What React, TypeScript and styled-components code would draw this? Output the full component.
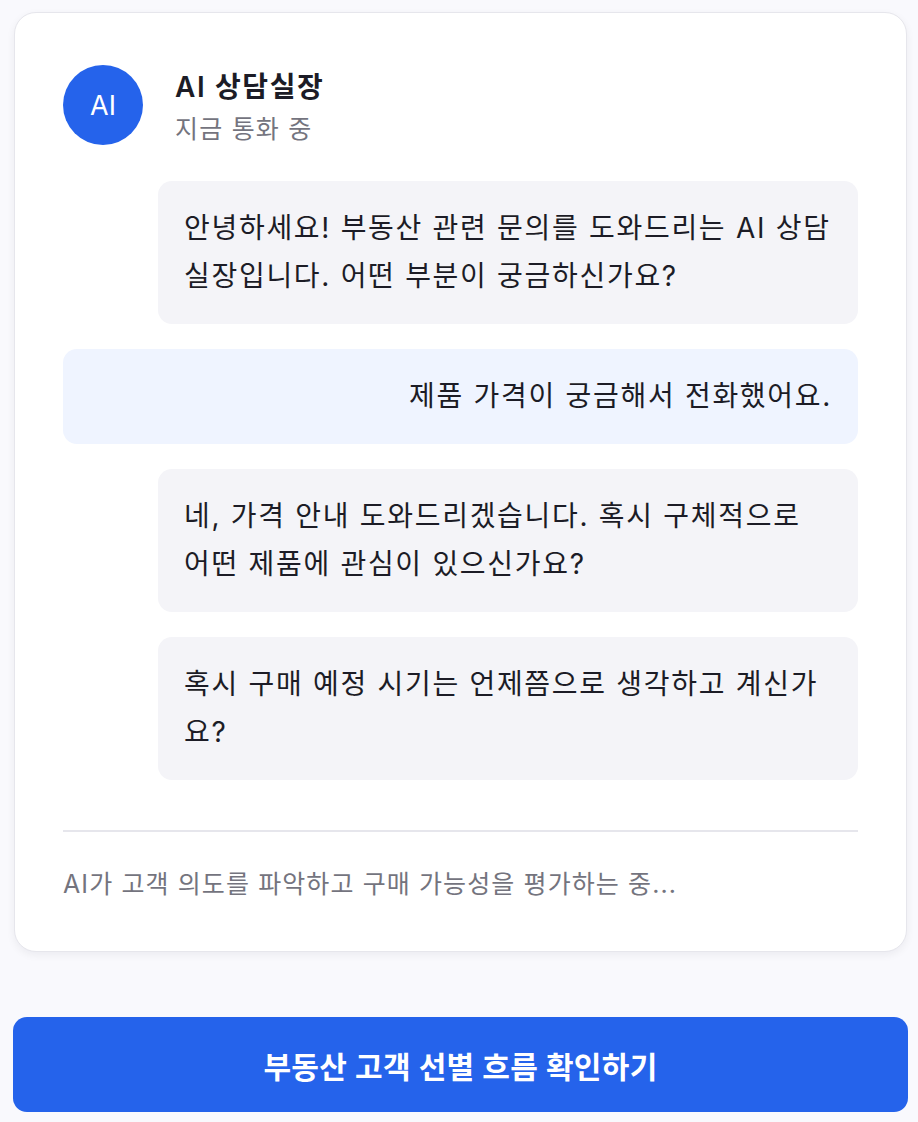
import styled, { createGlobalStyle } from "styled-components";

const GlobalStyle = createGlobalStyle`
  html, body {
    margin: 0;
    padding: 0;
    background: #f9f9fd;
  }
  body {
    font-family: "Inter", "Noto Sans CJK KR", sans-serif;
    color: #1c1c26;
  }
`;

const Page = styled.div`
  padding: 12px 10px 10px 13px;
  display: flex;
  flex-direction: column;
  gap: 65px;
`;

const Card = styled.section`
  margin-left: 1px;
  margin-right: 1px;
  background: #ffffff;
  border: 1px solid #e6e6ec;
  border-radius: 22px;
  box-shadow: 0 3px 8px rgba(20, 20, 40, 0.06);
  padding: 52px 48px 51px 48px;
`;

const Header = styled.header`
  display: flex;
  align-items: center;
  gap: 32px;
  margin-bottom: 36px;
`;

const Avatar = styled.div`
  width: 80px;
  height: 80px;
  border-radius: 50%;
  background: #2563eb;
  color: #ffffff;
  display: flex;
  align-items: center;
  justify-content: center;
  font-size: 27px;
  font-weight: 400;
`;

const Who = styled.div`
  display: flex;
  flex-direction: column;
  gap: 4px;
`;

const Name = styled.div`
  font-size: 28px;
  font-weight: 600;
  letter-spacing: 1.6px;
  color: #1c1c26;
`;

const Status = styled.div`
  font-size: 25px;
  letter-spacing: 1.2px;
  color: #74747e;
`;

const Messages = styled.div`
  display: flex;
  flex-direction: column;
  gap: 25px;
`;

const Bubble = styled.div<{ $mine?: boolean }>`
  align-self: ${(p) => (p.$mine ? "stretch" : "flex-end")};
  width: ${(p) => (p.$mine ? "auto" : "700px")};
  box-sizing: border-box;
  background: ${(p) => (p.$mine ? "#eff4ff" : "#f4f4f8")};
  border-radius: 14px;
  padding: 23px 26px 24px 26px;
  font-size: 28px;
  line-height: 48px;
  letter-spacing: 1.7px;
  text-align: ${(p) => (p.$mine ? "right" : "left")};
  color: #1c1c26;
`;

const Divider = styled.hr`
  border: none;
  border-top: 2px solid #e6e6ec;
  margin: 50px 0 0 0;
`;

const Thinking = styled.p`
  margin: 32px 0 0 0;
  font-size: 25px;
  letter-spacing: 1.1px;
  color: #74747e;
`;

const Action = styled.button`
  height: 95px;
  border: none;
  border-radius: 14px;
  background: #2563eb;
  color: #ffffff;
  font-family: "Inter", "Noto Sans CJK KR", sans-serif;
  font-size: 30px;
  font-weight: 600;
  letter-spacing: 0.3px;
  cursor: pointer;
`;

const chat = [
  { mine: false, text: "안녕하세요! 부동산 관련 문의를 도와드리는 AI 상담실장입니다. 어떤 부분이 궁금하신가요?" },
  { mine: true, text: "제품 가격이 궁금해서 전화했어요." },
  { mine: false, text: "네, 가격 안내 도와드리겠습니다. 혹시 구체적으로 어떤 제품에 관심이 있으신가요?" },
  { mine: false, text: "혹시 구매 예정 시기는 언제쯤으로 생각하고 계신가요?" },
];

export default function App() {
  return (
    <>
      <GlobalStyle />
      <Page>
        <Card>
          <Header>
            <Avatar>AI</Avatar>
            <Who>
              <Name>AI 상담실장</Name>
              <Status>지금 통화 중</Status>
            </Who>
          </Header>
          <Messages>
            {chat.map((m, i) => (
              <Bubble key={i} $mine={m.mine}>
                {m.text}
              </Bubble>
            ))}
          </Messages>
          <Divider />
          <Thinking>AI가 고객 의도를 파악하고 구매 가능성을 평가하는 중...</Thinking>
        </Card>
        <Action>부동산 고객 선별 흐름 확인하기</Action>
      </Page>
    </>
  );
}
